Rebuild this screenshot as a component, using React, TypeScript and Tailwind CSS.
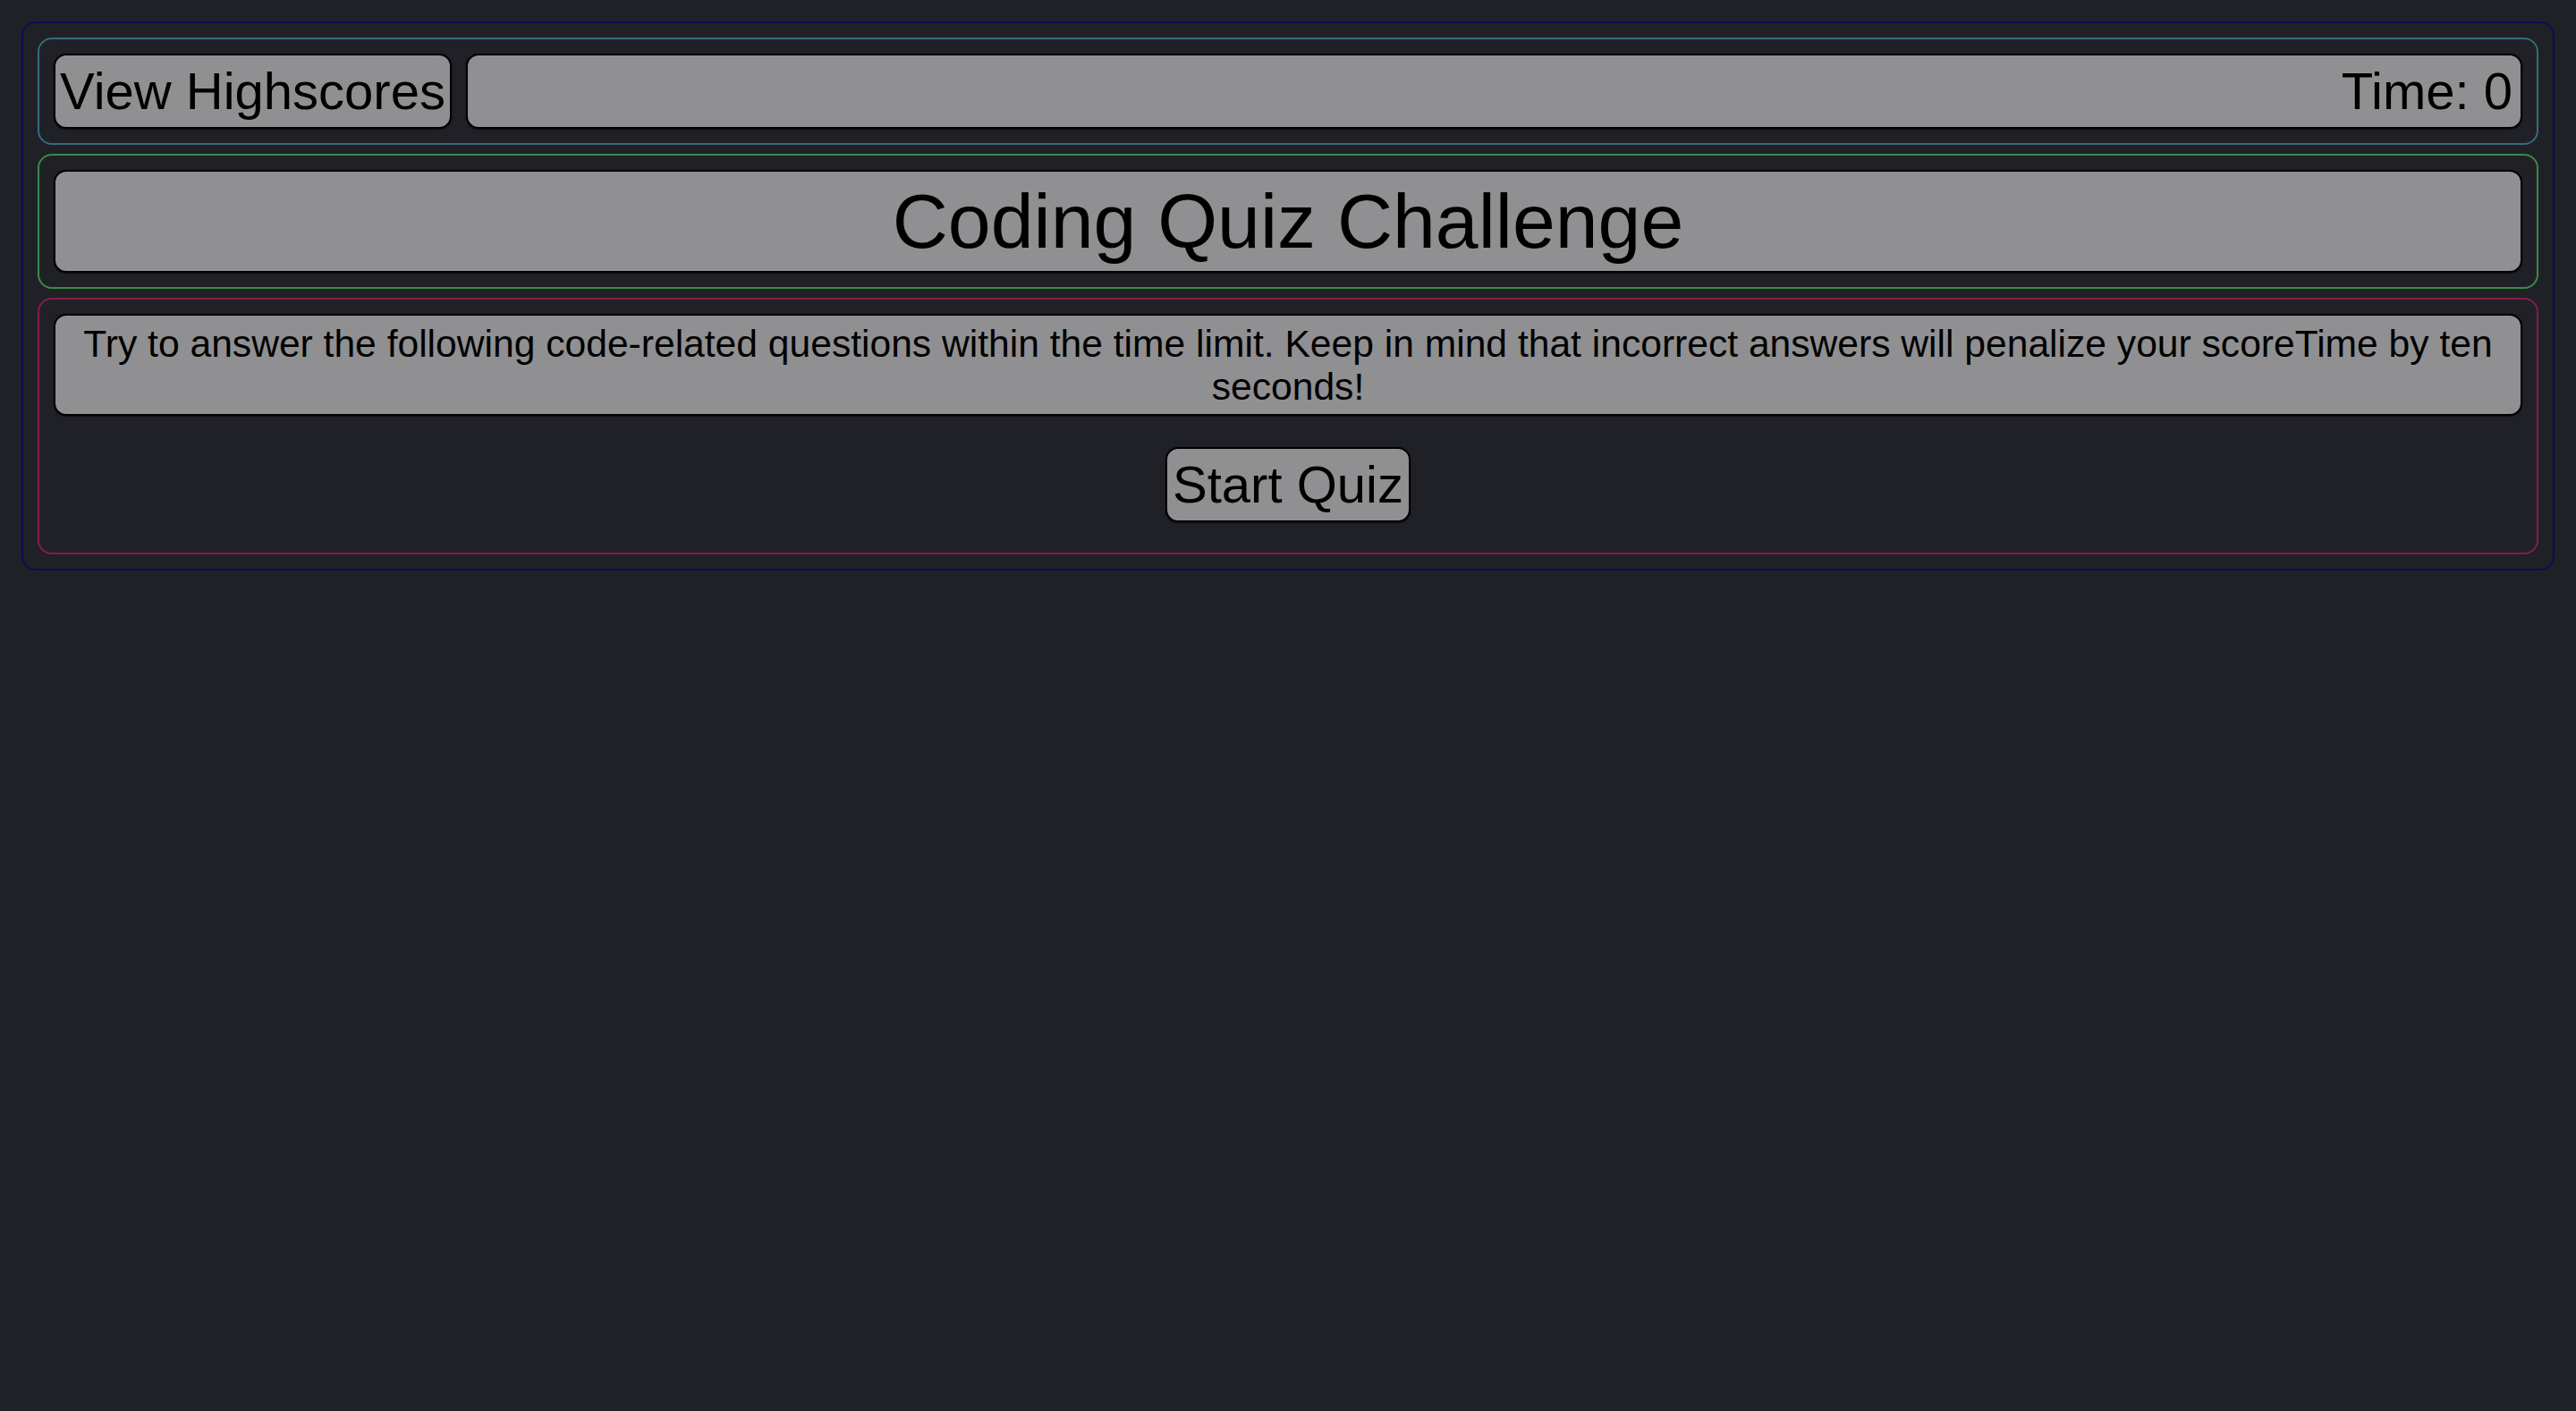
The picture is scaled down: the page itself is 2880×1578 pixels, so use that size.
import React from "react";

// Coding quiz start screen: header with highscores link + timer,
// title banner, intro text and the start button.

const panel =
  "rounded-[14px] border-2 border-black bg-[#909092] text-black shadow-[0_1px_2px_rgba(0,0,0,0.6)]";

export default function App() {
  const time = 0;

  return (
    <div
      className="min-h-screen bg-[#202127] p-[24px]"
      style={{ fontFamily: '"Liberation Sans", Arial, Helvetica, sans-serif' }}
    >
      <div className="flex flex-col gap-[10px] rounded-[16px] border-2 border-[#0d0c52] p-[16px]">
        <header className="flex gap-[16px] rounded-[16px] border-2 border-[#356b7d] p-[16px]">
          <button
            type="button"
            className={`${panel} h-[84px] shrink-0 px-[5px] text-[58px] leading-[66px]`}
          >
            View Highscores
          </button>
          <div
            className={`${panel} flex h-[84px] flex-1 items-center justify-end pr-[9px] text-[58px] leading-[66px]`}
          >
            Time: {time}
          </div>
        </header>

        <section className="rounded-[16px] border-2 border-[#3c8a48] p-[16px]">
          <h1 className={`${panel} h-[115px] py-[6px] text-center text-[86px] font-normal leading-[99px]`}>
            Coding Quiz Challenge
          </h1>
        </section>

        <section className="flex flex-col items-center rounded-[16px] border-2 border-[#8a1a47] px-[16px] pb-[34px] pt-[16px]">
          <p className={`${panel} w-full px-[8px] py-[7px] text-center text-[42.6px] leading-[48px]`}>
            Try to answer the following code-related questions within the time limit. Keep in mind that
            incorrect answers will penalize your scoreTime by ten seconds!
          </p>
          <button
            type="button"
            className={`${panel} mt-[35px] h-[84px] px-[6px] text-[58px] leading-[66px]`}
          >
            Start Quiz
          </button>
        </section>
      </div>
    </div>
  );
}
